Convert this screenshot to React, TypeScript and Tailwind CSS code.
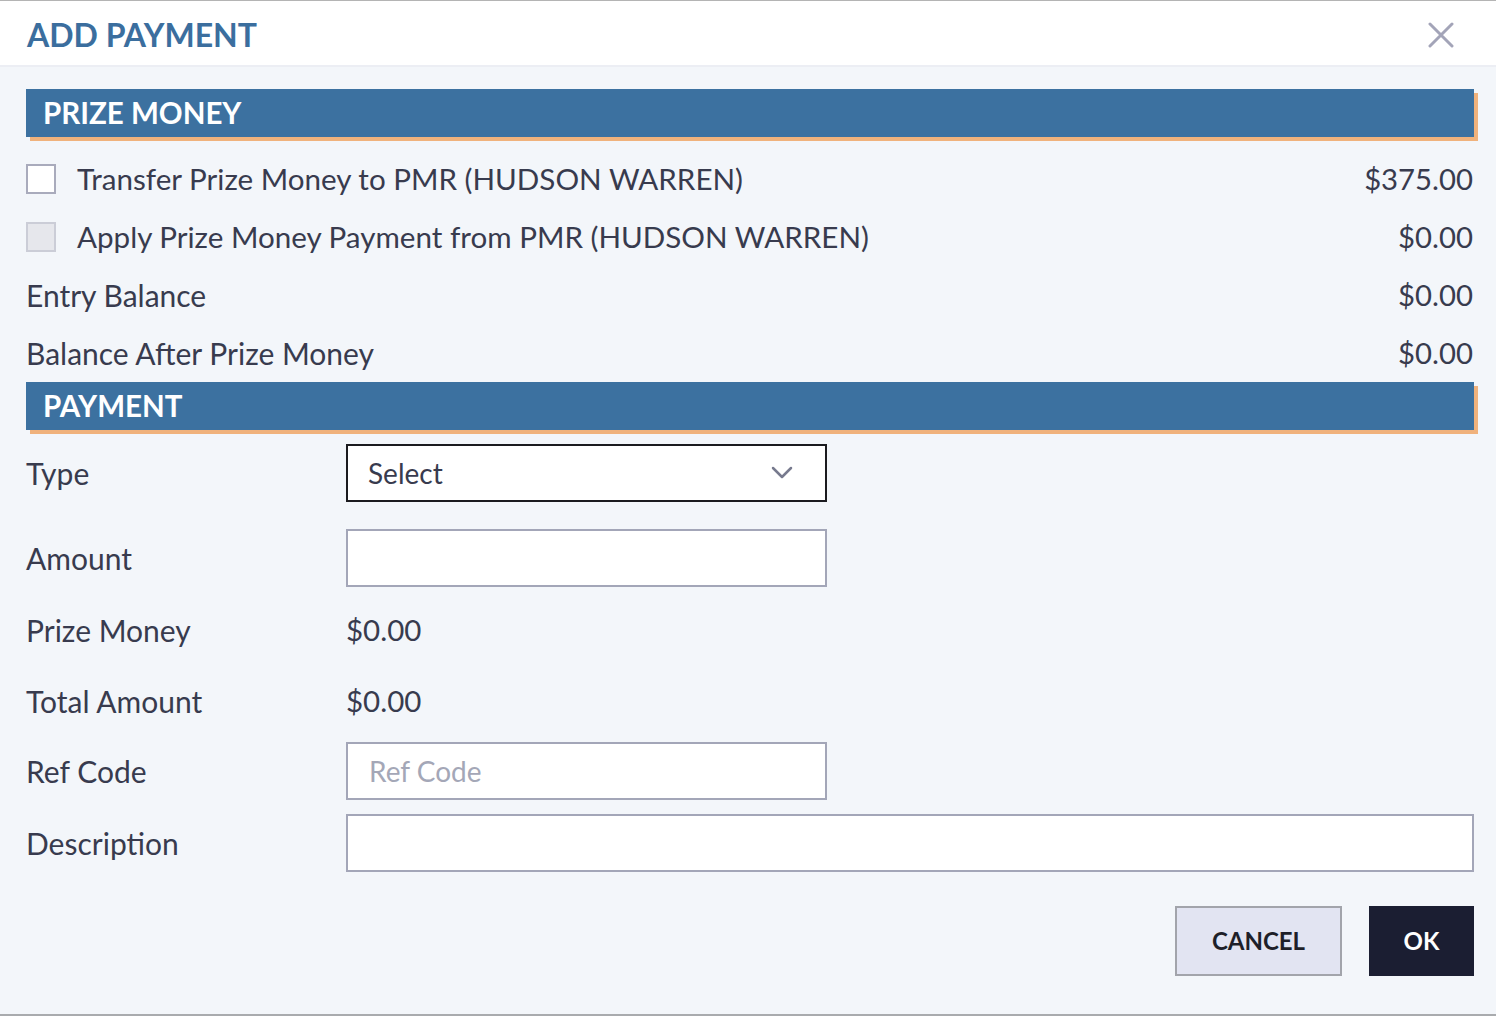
import React from "react"

const rows = [
  { label: "Transfer Prize Money to PMR (HUDSON WARREN)", value: "$375.00", box: "on" },
  { label: "Apply Prize Money Payment from PMR (HUDSON WARREN)", value: "$0.00", box: "off" },
  { label: "Entry Balance", value: "$0.00" },
  { label: "Balance After Prize Money", value: "$0.00" },
]

function SectionBar({ title }: { title: string }) {
  return (
    <div className="h-[48px] bg-[#3c71a0] shadow-[4px_4px_0_#f0b27c] pl-[17px] flex items-center text-white text-[29.5px] font-bold leading-none">
      {title}
    </div>
  )
}

function Label({ children }: { children: React.ReactNode }) {
  return <div className="w-[320px] shrink-0 text-[30px] text-[#383b4e]">{children}</div>
}

export default function App() {
  return (
    <div
      className="w-[1496px] h-[1016px] flex flex-col bg-[#f3f6fa] border-t border-[#b4b4b4] border-b-2 border-b-[#a9abae] overflow-hidden"
      style={{ fontFamily: "Lato, 'Open Sans', sans-serif" }}
    >
      {/* Header */}
      <div className="h-[66px] shrink-0 bg-white border-b-2 border-[#eceef4] flex items-center justify-between pl-[27px] pr-[42px]">
        <h1 className="text-[32px] font-bold text-[#3b6e9e] mt-[3px]">ADD PAYMENT</h1>
        <svg width="26" height="26" viewBox="0 0 26 26" className="mt-[3px]">
          <path d="M2 2 L24 24 M24 2 L2 24" stroke="#a3a4b8" strokeWidth="3" strokeLinecap="round" />
        </svg>
      </div>

      <div className="pl-[26px] pr-[22px] pt-[22px] flex flex-col">
        <SectionBar title="PRIZE MONEY" />

        <div className="mt-[13px] flex flex-col">
          {rows.map((r) => (
            <div key={r.label} className="h-[58px] flex items-center justify-between text-[30px] text-[#383b4e]">
              <div className="flex items-center">
                {r.box === "on" && <div className="w-[30px] h-[30px] bg-white border-2 border-[#a9abbc] mr-[21px]" />}
                {r.box === "off" && <div className="w-[30px] h-[30px] bg-[#e6e7ec] border-2 border-[#cbcdd7] mr-[21px]" />}
                <span className={r.box ? "text-[29.6px]" : ""}>{r.label}</span>
              </div>
              <span className="pr-px text-[29.3px]">{r.value}</span>
            </div>
          ))}
        </div>

        <SectionBar title="PAYMENT" />

        <div className="mt-[14px] h-[58px] flex items-center">
          <Label>Type</Label>
          <div className="w-[481px] h-[58px] bg-white border-2 border-[#1b1b1f] flex items-center justify-between pl-[20px] pr-[32px] text-[28px] text-[#383b4e]">
            <span>Select</span>
            <svg width="22" height="14" viewBox="0 0 22 14">
              <path d="M2 2 L11 11 L20 2" stroke="#777a8e" strokeWidth="2.5" fill="none" strokeLinecap="round" strokeLinejoin="round" />
            </svg>
          </div>
        </div>

        <div className="mt-[27px] h-[58px] flex items-center">
          <Label>Amount</Label>
          <div className="w-[481px] h-[58px] bg-white border-2 border-[#a3a6b8]" />
        </div>

        <div className="mt-[14px] h-[58px] flex items-center">
          <Label>Prize Money</Label>
          <span className="text-[29.5px] text-[#383b4e]">$0.00</span>
        </div>

        <div className="mt-[13px] h-[58px] flex items-center">
          <Label>Total Amount</Label>
          <span className="text-[29.5px] text-[#383b4e]">$0.00</span>
        </div>

        <div className="mt-[12px] h-[58px] flex items-center">
          <Label>Ref Code</Label>
          <div className="w-[481px] h-[58px] bg-white border-2 border-[#a3a6b8] flex items-center pl-[21px] text-[28px] text-[#a4a7b7]">
            Ref Code
          </div>
        </div>

        <div className="mt-[14px] h-[58px] flex items-center">
          <Label>Description</Label>
          <div className="flex-1 h-[58px] bg-white border-2 border-[#a3a6b8]" />
        </div>

        <div className="mt-[34px] flex justify-end gap-[27px]">
          <button className="w-[167px] h-[70px] bg-[#e2e4f2] border-2 border-[#a2a4ab] text-[24px] font-bold text-[#1e1f29]">
            CANCEL
          </button>
          <button className="w-[105px] h-[70px] bg-[#1b1e32] text-[24px] font-bold text-white">OK</button>
        </div>
      </div>
    </div>
  )
}
